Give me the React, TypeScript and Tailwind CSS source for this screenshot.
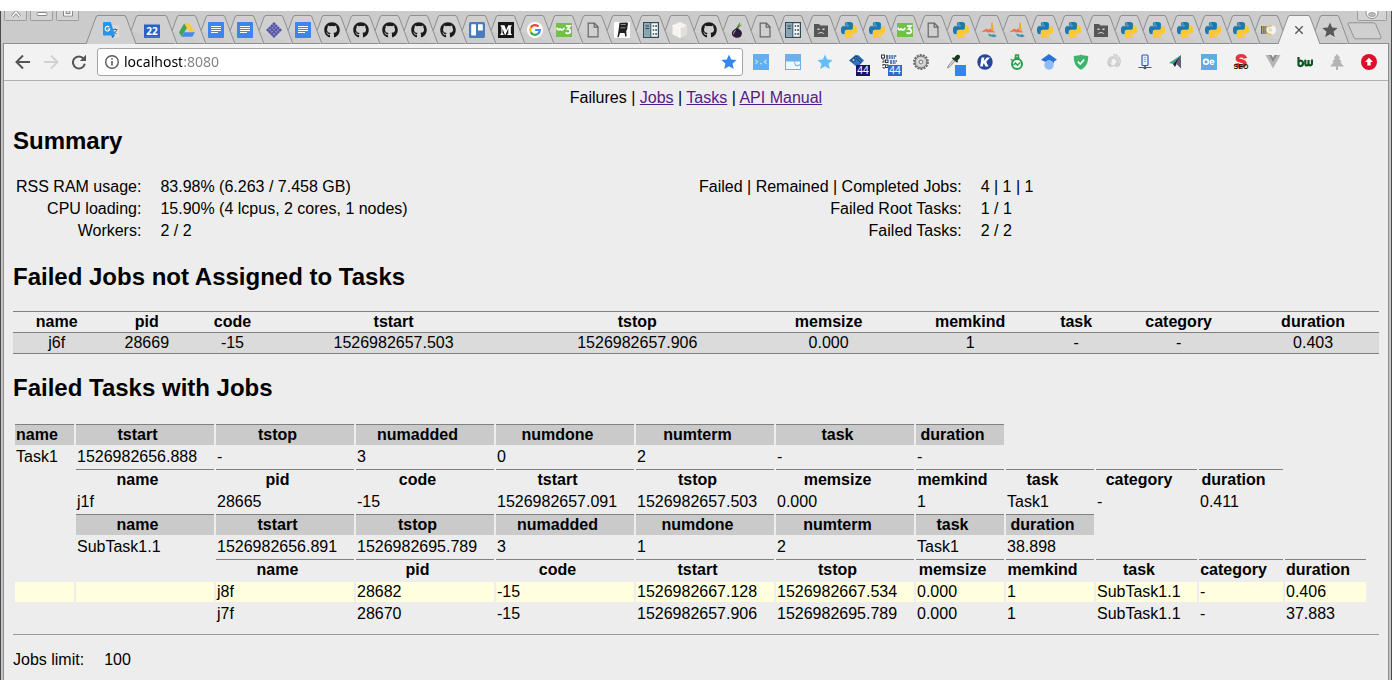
import React from "react";
import { FaGithub } from "react-icons/fa";

/* ---------- icons ---------- */

function Svg({ children, box = 16, size = "size-4" }: { children: React.ReactNode; box?: number; size?: string }) {
  return (
    <svg viewBox={`0 0 ${box} ${box}`} className={`${size} block shrink-0`} aria-hidden="true">
      {children}
    </svg>
  );
}

const pythonHalf =
  "M14.25.18l.9.2.73.26.59.3.45.32.34.34.25.34.16.33.1.3.04.26.02.2-.01.13V8.5l-.05.63-.13.55-.21.46-.26.38-.3.31-.33.25-.35.19-.35.14-.33.1-.3.07-.26.04-.21.02H8.77l-.69.05-.59.14-.5.22-.41.27-.33.32-.27.35-.2.36-.15.37-.1.35-.07.32-.04.27-.02.21v3.06H3.17l-.21-.03-.28-.07-.32-.12-.35-.18-.36-.26-.36-.36-.35-.46-.32-.59-.28-.73-.21-.88-.14-1.05-.05-1.23.06-1.22.16-1.04.24-.87.32-.71.36-.57.4-.44.42-.33.42-.24.4-.16.36-.1.32-.05.24-.01h.16l.06.01h8.16v-.83H6.18l-.01-2.75-.02-.37.05-.34.11-.31.17-.28.25-.26.31-.23.38-.2.44-.18.51-.15.58-.12.64-.1.71-.06.77-.04.84-.02 1.27.05zm-6.3 1.98l-.23.33-.08.41.08.41.23.34.33.22.41.09.41-.09.33-.22.23-.34.08-.41-.08-.41-.23-.33-.33-.22-.41-.09-.41.09z";

const Python = () => (
  <Svg box={24}>
    <path d={pythonHalf} fill="#1f78ab" stroke="#1f78ab" strokeWidth=".4" />
    <path d={pythonHalf} fill="#fdc92f" stroke="#fdc92f" strokeWidth=".4" transform="rotate(180 12 12)" />
  </Svg>
);
const Github = () => <FaGithub className="size-4 text-[#1b1b1b]" />;
const Doc = () => (
  <Svg>
    <rect width="16" height="16" rx=".8" fill="#3b85ee" />
    <path d="M3 4.5h10M3 6.5h10M3 8.5h10M3 10.5h7" stroke="#fff" strokeWidth="1" />
  </Svg>
);
const Translate = () => (
  <Svg>
    <rect x="7" y="3.5" width="9" height="12" rx="1" fill="#dcdcdc" />
    <path d="M9.5 7.5h5M12 6.3v1.2M13.8 7.5c-.5 2-2 3.5-3.6 4.3M10.5 9c.7 1.3 2 2.4 3.2 2.9" stroke="#65747a" fill="none" />
    <path d="M1 0h6.8L12 13.5H1a1 1 0 0 1-1-1V1a1 1 0 0 1 1-1z" fill="#2196f3" />
    <path d="M8 13.5h4L9.5 16z" fill="#1565c0" />
    <path d="M6.3 5.2A2.3 2.3 0 1 0 6.8 7H4.7" stroke="#fff" strokeWidth="1.1" fill="none" />
  </Svg>
);
const Calendar = () => (
  <Svg>
    <path d="M1 1h14v3H1z" fill="#c4cbd6" />
    <path d="M0 2.5h16V15H0z" fill="#2b60c8" />
    <path d="M0 14h16v2H0z" fill="#2f70dd" />
    <text x="8" y="12.6" fontSize="10" fontWeight="700" textAnchor="middle" fill="#fff" fontFamily="Noto Sans, sans-serif">22</text>
  </Svg>
);
const Drive = () => (
  <Svg>
    <path d="M5.3 1.3 0 10.3l2.7 4.5L8 5.8z" fill="#41a556" />
    <path d="M5.3 1.3h5.4L16 10.3h-5.3z" fill="#fccb3f" />
    <path d="M5.3 10.3H16l-2.7 4.5H2.7z" fill="#4688f1" />
  </Svg>
);
const Weave = () => (
  <Svg>
    <path d="M8 0l8 8-8 8-8-8z" fill="#5557a5" />
    <path d="M6 2l8 8M4 4l8 8M2 6l8 8M10 2l-8 8M12 4l-8 8M14 6l-8 8" stroke="#c7c7db" strokeWidth=".6" strokeDasharray="1.3 1" />
  </Svg>
);
const Trello = () => (
  <Svg>
    <rect width="16" height="16" rx="1.6" fill="#4a7cbd" />
    <rect x="2.2" y="2.2" width="4.8" height="11.2" rx=".6" fill="#fff" />
    <rect x="9" y="2.2" width="4.8" height="6.4" rx=".6" fill="#fff" />
  </Svg>
);
const Medium = () => (
  <Svg>
    <rect width="16" height="16" fill="#161616" />
    <path d="M2.5 3.2h3.9L8.3 8l1.9-4.8h3.6v.9l-1 .7v6.7l1 .7v.9H9.3v-.9l1-.7V6.2l-2.8 6.9h-.6L4.5 6.4v4.7l1.1 1.2v.8H2.4v-.8l1-1.2V4.9l-.9-.8z" fill="#fff" />
  </Svg>
);
const Google = () => (
  <Svg>
    <circle cx="8" cy="8" r="8" fill="#fff" />
    <g fill="none" strokeWidth="2.2">
      <path d="M3.8 5.6A4.8 4.8 0 0 1 11.5 4.6" stroke="#ea4335" />
      <path d="M3.8 5.6a4.8 4.8 0 0 0 0 4.8" stroke="#fbbc05" />
      <path d="M3.8 10.4a4.8 4.8 0 0 0 7.3 1.3" stroke="#34a853" />
      <path d="M11.1 11.7A4.8 4.8 0 0 0 12.8 8H8.2" stroke="#4285f4" />
    </g>
  </Svg>
);
const W3 = () => (
  <Svg>
    <rect y="1" width="16" height="14" rx=".6" fill="#70c04a" />
    <path d="M1 5.6c.1 2.4 2.6 3 3.3.7.4 2.3 3.2 2.2 3.8-.7M10 4h4l-2.3 2.8c3.7 0 3.3 5-.2 4.6-.9-.1-1.4-.5-1.8-1" stroke="#fff" strokeWidth="1.8" fill="none" />
  </Svg>
);
const Page = () => (
  <Svg>
    <path d="M3.2 1.2h6.2l3.6 3.6v10H3.2zM9.2 1.4v3.8h3.6" fill="none" stroke="#666" strokeWidth="1.2" />
  </Svg>
);
const Chair = () => (
  <Svg>
    <rect width="16" height="16" rx="1" fill="#fff" />
    <path d="M5.5.8l7.8-.4.7 1-.9 6.1-.9 1.5.4 5.500h-1.400L10.600 11H6l-1.300 4.200H3.400L4.600 8z" fill="#222" />
    <path d="M6.800 2.500h5M6.500 5.800h5.200" stroke="#bbb" strokeWidth=".7" />
  </Svg>
);
const Ledger = () => (
  <Svg>
    <rect x=".6" y=".6" width="14.8" height="14.8" fill="#f3f5f6" stroke="#304958" strokeWidth="1.2" />
    <rect x="1.2" y="1.2" width="6.3" height="13.6" fill="#86a5b3" />
    <path d="M7.8 1v14M2.5 4h3.5M2.5 6.5h3.5" stroke="#304958" strokeWidth="1" />
    <path d="M9.7 4h1.500M12.200 4H14M9.700 8h1.500M12.200 8H14M9.700 12h1.500M12.200 12H14" stroke="#304958" strokeWidth="1.600" />
  </Svg>
);
const Cube = () => (
  <Svg>
    <path d="M8 0l7 3.3v8.9L8 16l-7.500-3.600V3.300z" fill="#f5f4f1" />
    <path d="M8 6.800l7-3.500v8.900L8 16z" fill="#e0dfdc" />
    <path d="M.5 3.300L8 6.800V16" fill="none" stroke="#fff" />
  </Svg>
);
const Onion = () => (
  <Svg>
    <path d="M8 6.500C7.600 3.700 9.400 2.500 11.200.2c.1 2.100-.9 2.400-1.500 3.800 1.500-1.100 2.200-1 3.300-1.500-1.200 1.200-3 2.300-3.200 4z" fill="#4f8c24" />
    <path d="M7.800 5.300c.8 1.700 5.100 2.400 5.100 6 0 3-2 4.500-4.700 4.500s-5.300-1.700-5.300-4.300C2.900 8 7 7.200 7.800 5.300z" fill="#2c1b39" />
    <path d="M7.400 7.600C4.600 9.400 3.800 11 4.800 13.200c.2-2.300 1.100-3.300 2.600-5.600z" fill="#cebcda" />
  </Svg>
);
const SadFolder = () => (
  <Svg>
    <path d="M1 2h5l1.500 1.500H15V15H1z" fill="#565656" />
    <path d="M4.500 7.200h2M9.500 7.200h2" stroke="#ddd" strokeWidth="1.400" />
    <path d="M5 12.200c1-2.200 5-2.200 6 0" stroke="#ddd" fill="none" />
  </Svg>
);
const Sketch = () => (
  <Svg>
    <path d="M10 .8l1.600-.3 1 8.300-2.400-1.500z" fill="#f0a52c" />
    <path d="M.4 10.200C2 8.600 3.700 7.500 5.800 6.400l1.400 1.500L9.500 6l.8 4-3.600.6-1.400-1.200z" fill="#ee704a" />
    <path d="M9.800 7.500l4.700 2.800-4.200.2z" fill="#ee704a" />
    <path d="M7.200 12c1.500-.6 2.600 0 3.400.9 1.600-1 3.200-.8 5.200 1-2 1.400-3.900 1.700-5.200.7-1.600.3-3-.8-3.400-2.600z" fill="#3f93ae" />
  </Svg>
);
const Flower = () => (
  <Svg>
    <rect y="4" width="5.500" height="8" fill="#50628b" />
    <path d="M1.800 4v8M4 4v8" stroke="#d9bd5b" />
    <path d="M5.500 8c-1-3 1-4.500 4-4.500L13 5v7l-4 .5z" fill="#efbf45" />
    <circle cx="10.300" cy="8" r="4.800" fill="#f4f4ee" />
    <path d="M6.200 5l5-1.500M6 11l4.500 2" stroke="#efbf45" strokeWidth="1.500" />
    <circle cx="9.200" cy="7.800" r="2" fill="#dedcc7" />
  </Svg>
);
const Close = () => (
  <Svg>
    <path d="M4.300 4.300l7.400 7.400M11.700 4.300l-7.400 7.400" stroke="#555" strokeWidth="1.300" />
  </Svg>
);
const starPath = "M8 .6l2.200 5 5.400.5-4.100 3.600 1.300 5.400L8 12.200l-4.800 2.900 1.300-5.400L.4 6.100l5.400-.5z";
const Star = ({ fill }: { fill: string }) => (
  <Svg>
    <path d={starPath} fill={fill} />
  </Svg>
);

/* extension icons */
const Face = () => (
  <Svg>
    <rect width="16" height="16" fill="#65aeeb" />
    <path d="M2.500 5.800l2 2-2 2M13.500 5.800l-2 2 2 2M7 9.800h2" stroke="#c4ebfc" strokeWidth="1.100" fill="none" />
  </Svg>
);
const Wave = () => (
  <Svg>
    <rect width="16" height="16" fill="#70aeea" />
    <path d="M1 7.500h7.500c1 0 1 4.800 3 4.800S13 11.400 15 11.400V15H1z" fill="#eef8ff" />
    <path d="M9.300 7.500H15v2.700c-1.800 0-2 1-3 1-1.400 0-1.500-2.700-2.700-3.700z" fill="#eef8ff" />
  </Svg>
);
const Tag = () => (
  <Svg>
    <path d="M0 6.500L6.500 1l3 .2L15 6.500l-6.500 7z" fill="#2f72bd" />
    <path d="M1.500 6.500l5-4.200 2.300.2" stroke="#14365e" fill="none" />
    <circle cx="4.500" cy="6" r="1.700" fill="#9fc6ec" stroke="#173e6e" />
    <path d="M7 4l5 5M9 3l4 4" stroke="#173e6e" />
  </Svg>
);
const Tree = () => (
  <Svg>
    <path d="M2 4v10M2 7h3M2 10.500h3M2 14h3M5 2h2" stroke="#444" strokeDasharray="2 1" />
    <rect x=".5" y="1" width="3" height="3" fill="#fff" stroke="#333" />
    <rect x="4.500" y="6" width="2.500" height="2.500" fill="#fff" stroke="#333" />
    <rect x="4.500" y="11" width="2.500" height="2.500" fill="#fff" stroke="#333" />
    <path d="M5 2h11M5 4h9M9 7h7M9 9h6" stroke="#275f9e" strokeWidth="1.400" strokeDasharray="2 .7" />
  </Svg>
);
const Gear = () => (
  <Svg>
    <circle cx="8" cy="8" r="6.900" fill="none" stroke="#6b6b6b" strokeWidth="2" strokeDasharray="2 1.100" />
    <circle cx="8" cy="8" r="6" fill="#c9c9c9" stroke="#696969" />
    <circle cx="8" cy="8" r="3.300" fill="#a7a7a7" stroke="#efefef" />
    <circle cx="8" cy="8" r="1.600" fill="#f3f3f3" stroke="#777" strokeWidth=".7" />
  </Svg>
);
const Dropper = () => (
  <Svg>
    <path d="M9 5L3.500 11.500 2.500 14 5 12.500 10.500 6.500" fill="#ddd" stroke="#777" strokeWidth=".8" />
    <path d="M7.500 3.500l2 .3C10.500 1.500 12 0 14 1s.8 4-1.300 5l.3 2.200-1.200.3L7 4.500z" fill="#19391f" />
  </Svg>
);
const KBadge = () => (
  <Svg>
    <circle cx="8" cy="8" r="7.700" fill="#23479c" />
    <path d="M4.600 3.500h2.800l-.6 3.400 3-3.400h3.300L9.200 7.700l2.300 4.800H8.400L7 9.200l-.7.800-.4 2.500H3.100z" fill="#fff" />
  </Svg>
);
const Potion = () => (
  <Svg>
    <circle cx="8" cy="10" r="5" fill="#effaf0" stroke="#2d9e4b" strokeWidth="2" />
    <path d="M5.500 4h5M6.500 1h3v4h-3zM1.800 5.300l2 1.500" stroke="#2d9e4b" strokeWidth="1.400" fill="#a6dcb2" />
    <path d="M4.500 11l2-2 2 2.300 2.700-2.800" fill="none" stroke="#2d9e4b" strokeWidth="1.400" />
  </Svg>
);
const Scholar = () => (
  <Svg>
    <circle cx="8" cy="11" r="4.700" fill="#8dbcf8" />
    <path d="M8 0l8 5.700-3 1.800v2L11.700 8C9.500 5.800 6.500 5.800 4.300 8L0 5.700z" fill="#2b72d5" />
  </Svg>
);
const Shield = () => (
  <Svg>
    <path d="M8 .5c2 1 4.500 1.300 7.200 1.500 0 6-1.200 10.500-7.200 13.700C2 12.500.8 8 .8 2 3.500 1.800 6 1.500 8 .5z" fill="#3eb36b" />
    <path d="M4.800 7.600L7.200 10l4-4.600" stroke="#fff" strokeWidth="1.600" fill="none" />
  </Svg>
);
const Swirl = () => (
  <Svg>
    <path d="M7 13.500C1.500 13 .5 5 6.500 2c-2 2.500-2 8 .5 11.500z" fill="#c9c9c9" />
    <path d="M5.500 9.500C4 5.500 7 2.500 10 3.500s4 6 1 9.500" fill="none" stroke="#d4d4d4" strokeWidth="3" />
    <path d="M5.500 10.500c2 2.500 5.500 1.500 5.800-1.500M8 .8c6-.8 9.500 6 5.500 11.500" fill="none" stroke="#bdbdbd" />
  </Svg>
);
const Server = () => (
  <Svg>
    <rect x="5" y="1" width="6" height="10.500" rx="1" fill="#eaf2ff" stroke="#355fae" strokeWidth="1.200" />
    <path d="M6.800 3.500h2.400M6.800 5.500h2.400M6.800 7.500h2.400" stroke="#6f92cf" strokeWidth=".8" />
    <path d="M8 11.500v2M1.500 13.500h13" stroke="#555" strokeWidth="1.200" />
    <circle cx="8" cy="13.700" r="1.500" fill="#555" />
  </Svg>
);
const Arrow = () => (
  <Svg>
    <path d="M12 1L0 9l4 1z" fill="#3aad88" />
    <path d="M12 1L4 10l2 3 2-4z" fill="#1b222c" />
    <path d="M12 1L7 9.500l5 5z" fill="#8c4c9f" />
    <path d="M12 1L9 10l3 4.500z" fill="#4a6d70" />
  </Svg>
);
const Oe = () => (
  <Svg>
    <rect width="16" height="16" fill="#5faedf" />
    <circle cx="5" cy="7.800" r="2.400" fill="none" stroke="#fff" strokeWidth="1.600" />
    <path d="M9.300 8.200h3.800c0-2.800-4-2.900-4 .1 0 2.500 2.800 2.600 3.800 1.400" fill="none" stroke="#fff" strokeWidth="1.200" />
  </Svg>
);
const Seo = () => (
  <Svg>
    <path d="M12.300 4.400C11.800 2.300 10.200 1.800 8 1.800c-4.200 0-4.800 4-1.300 4.800 3 .7 5.300.8 5.300 3.100 0 3.200-7.500 3-8.200-.4" fill="none" stroke="#e6343a" strokeWidth="3.600" />
    <text x="8" y="15" fontSize="7" fontWeight="700" textAnchor="middle" fill="#111" fontFamily="Liberation Sans, sans-serif">SEO</text>
  </Svg>
);
const Vue = () => (
  <Svg>
    <path d="M.5 1h3.300L8 8.400 12.200 1h3.300L8 14.500z" fill="#b5b5b5" />
    <path d="M3.800 1h2.700L8 3.700 9.500 1h2.700L8 8.400z" fill="#8b8b8b" />
  </Svg>
);
const Bw = () => (
  <Svg>
    <path d="M1.500 3v8.800M1.500 8c1-2 4.500-1.800 4.500 1.300s-3.600 3.600-4.500 1.500M8.300 5.700v4.100c0 2.400 3.200 2.200 3.200-.2V6v3.600c0 2.500 3.500 2.500 3.500-.3V5.500" stroke="#0c5420" strokeWidth="2.200" fill="none" />
  </Svg>
);
const Fir = () => (
  <Svg>
    <path d="M8 0l3.500 4.300H9.800l3 3.700h-1.600l3.800 4.500H9V16H7v-3.500H1L4.800 8H3.200l3-3.700H4.500z" fill="#b4b4b4" />
  </Svg>
);
const RedUp = () => (
  <Svg>
    <circle cx="8" cy="8" r="8" fill="#e30b2c" />
    <path d="M8 3.800l4 4.300H9.700v3.500H6.300V8.100H4z" fill="#fff" />
  </Svg>
);

/* ---------- tab strip ---------- */

type IconType = () => React.ReactElement;
type TabInfo = { title: string; icon: IconType; width: number; cls: string };

const wide = 29;
const narrow = 28;
const t = (title: string, icon: IconType, width = wide, cls = width === wide ? "w-[29px]" : "w-[28px]"): TabInfo => ({
  title,
  icon,
  width,
  cls,
});

const tabs: TabInfo[] = [
  t("Translate", Translate, 40, "w-[40px]"),
  t("Calendar", Calendar, 41, "w-[41px]"),
  t("Drive", Drive),
  t("Document", Doc),
  t("Document", Doc),
  t("Weave", Weave),
  t("Document", Doc),
  t("GitHub", Github),
  t("GitHub", Github),
  t("GitHub", Github),
  t("GitHub", Github),
  t("GitHub", Github),
  t("Trello", Trello),
  t("Medium", Medium),
  t("Google", Google),
  t("W3Schools", W3),
  t("Page", Page),
  t("Chair", Chair),
  t("Ledger", Ledger),
  t("Cube", Cube),
  t("GitHub", Github),
  t("Tor", Onion, narrow),
  t("Page", Page, narrow),
  t("Ledger", Ledger, narrow),
  t("Crashed page", SadFolder, narrow),
  t("Python", Python, narrow),
  t("Python", Python, narrow),
  t("W3Schools", W3, narrow),
  t("Page", Page, narrow),
  t("Python", Python, narrow),
  t("Sketch", Sketch, narrow),
  t("Sketch", Sketch, narrow),
  t("Python", Python, narrow),
  t("Python", Python, narrow),
  t("Crashed page", SadFolder, narrow),
  t("Python", Python, narrow),
  t("Python", Python, narrow),
  t("Python", Python, narrow),
  t("Python", Python, narrow),
  t("Python", Python, narrow),
  t("Flower", Flower, narrow),
  t("Close localhost:8080", Close, 32, "w-[32px]"),
  t("Bookmarks", () => <Star fill="#585858" />),
];

function Tab({ tab, first, active }: { tab: TabInfo; first: boolean; active: boolean }) {
  const w = tab.width;
  const left = first || active ? "M-5 33L5 6Q5.500 4.500 7 4.500" : "M0 20L5 6Q5.500 4.500 7 4.500";
  const d = `${left}H${w - 7}Q${w - 5.5} 4.500 ${w - 5} 6L${w + 5} 33`;
  const Icon = tab.icon;
  return (
    <button
      type="button"
      aria-label={tab.title}
      className={`${tab.cls} ${active ? "z-10" : ""} relative flex h-8 shrink-0 justify-center pt-[11px]`}
    >
      <svg className="absolute inset-0 size-full overflow-visible" aria-hidden="true">
        <path d={d} fill={active ? "#f2f2f2" : "#d0d0d0"} stroke="#8f8f8f" />
      </svg>
      <span className="relative">
        <Icon />
      </span>
    </button>
  );
}

function WindowButton({ label, children }: { label: string; children: React.ReactNode }) {
  return (
    <button
      type="button"
      aria-label={label}
      className="flex h-[10px] w-[23px] justify-center overflow-hidden rounded-b-xs border border-t-0 border-[#9d9d9d] bg-[#d3d3d3]"
    >
      <svg viewBox="0 0 12 8" className="h-2 w-3" aria-hidden="true">
        {children}
      </svg>
    </button>
  );
}

function TabStrip() {
  return (
    <div className="flex h-8 items-start bg-[#cbcbcb] pl-[3px]">
      <div className="flex shrink-0 gap-[3px] pr-3">
        <WindowButton label="Close">
          <path d="M2 5.500L6 1l4 4.500" stroke="#888" strokeWidth="3" fill="none" />
          <path d="M2 5.500L6 1l4 4.500" stroke="#fff" strokeWidth="1.300" fill="none" />
        </WindowButton>
        <WindowButton label="Minimize">
          <rect x="1" y="1.500" width="10" height="3" rx="1" fill="#fff" stroke="#888" />
        </WindowButton>
        <WindowButton label="Maximize">
          <path d="M1.500-2v7h9v-7M4-2v4.500h4V-2" fill="none" stroke="#888" />
          <path d="M2.800-2v5.800h6.400V-2" fill="none" stroke="#fff" strokeWidth="1.200" />
        </WindowButton>
      </div>
      <div className="flex shrink-0">
        {tabs.map((tab, i) => (
          <Tab key={i} tab={tab} first={i === 0} active={i === tabs.length - 2} />
        ))}
      </div>
      <div className="flex flex-1 flex-col items-start pl-[3px]">
        <button
          type="button"
          aria-label="Profile"
          className="mr-1 flex h-[10px] w-[30px] justify-center self-end overflow-hidden rounded-b-xs border border-t-0 border-[#9d9d9d] bg-[#d3d3d3]"
        >
          <svg viewBox="0 0 14 9" className="h-[9px] w-[14px]" aria-hidden="true">
            <circle cx="7" cy="1.500" r="6" fill="#fff" stroke="#888" />
            <ellipse cx="7" cy="3.500" rx="3.500" ry="2" fill="#bbb" stroke="#888" strokeWidth=".7" />
          </svg>
        </button>
        <button type="button" aria-label="New tab" className="mt-px">
          <svg viewBox="0 0 35 18" className="h-[18px] w-[35px]" aria-hidden="true">
            <path d="M2 .8h24.500Q28 .8 28.600 2L34 15q.5 1.800-1 1.800H9Q7.500 16.800 7 15.500L1 2Q.6.8 2 .8z" fill="#d0d0d0" stroke="#929292" />
          </svg>
        </button>
      </div>
    </div>
  );
}

/* ---------- toolbar ---------- */

type Ext = { name: string; icon: IconType; badge?: string; badgeCls?: string };

const extensions: Ext[] = [
  { name: "Face", icon: Face },
  { name: "Wave", icon: Wave },
  { name: "Favourites", icon: () => <Star fill="#64bdf6" /> },
  { name: "Tags", icon: Tag, badge: "44", badgeCls: "bg-[#1b1367]" },
  { name: "Tree", icon: Tree, badge: "44", badgeCls: "bg-[#2f6bc9]" },
  { name: "Settings", icon: Gear },
  { name: "Colour picker", icon: Dropper, badge: "", badgeCls: "bg-[#3584ee]" },
  { name: "K", icon: KBadge },
  { name: "Potion", icon: Potion },
  { name: "Scholar", icon: Scholar },
  { name: "Shield", icon: Shield },
  { name: "Swirl", icon: Swirl },
  { name: "Server", icon: Server },
  { name: "Arrow", icon: Arrow },
  { name: "Oe", icon: Oe },
  { name: "SEO", icon: Seo },
  { name: "Vue", icon: Vue },
  { name: "bw", icon: Bw },
  { name: "Fir", icon: Fir },
  { name: "Update", icon: RedUp },
];

function Toolbar() {
  return (
    <div className="flex h-[37px] items-center border-b border-[#b0b0b0] bg-[#f2f2f2] pr-[3px] pl-[11px]">
      <div className="flex shrink-0 gap-3">
        <button type="button" aria-label="Back">
          <Svg>
            <path d="M15 8H2.500M8 1.500L1.500 8 8 14.500" fill="none" stroke="#555" strokeWidth="2" />
          </Svg>
        </button>
        <button type="button" aria-label="Forward">
          <Svg>
            <path d="M1 8h12.500M8 1.500l6.500 6.500L8 14.500" fill="none" stroke="#d2d2d2" strokeWidth="2" />
          </Svg>
        </button>
        <button type="button" aria-label="Reload">
          <Svg>
            <path d="M12.600 4.600A6 6 0 1 0 13.800 9.800" fill="none" stroke="#555" strokeWidth="2" />
            <path d="M15 .8V7H8.800z" fill="#555" />
          </Svg>
        </button>
      </div>
      <div className="ml-[10px] flex h-7 min-w-0 flex-1 items-center rounded-[3px] border border-[#a6a6a6] bg-white pr-[5px] pl-[6px]">
        <Svg>
          <circle cx="8" cy="8" r="6.300" fill="none" stroke="#5a5a5a" strokeWidth="1.400" />
          <path d="M8 7v4.500M8 4.300v1.500" stroke="#5a5a5a" strokeWidth="1.600" />
        </Svg>
        <input
          type="text"
          aria-label="Address"
          defaultValue="localhost:8080"
          className="ml-1 h-6 min-w-0 flex-1 bg-[linear-gradient(to_right,#000_58px,#808080_58px)] bg-clip-text pb-[2px] font-['Noto_Sans',sans-serif] text-sm text-transparent outline-none"
        />
        <button type="button" aria-label="Bookmark this page">
          <Star fill="#3684ee" />
        </button>
      </div>
      <div className="ml-[2px] flex shrink-0">
        {extensions.map(({ name, icon: Icon, badge, badgeCls }) => (
          <button key={name} type="button" aria-label={name} className="relative flex h-7 w-8 items-center justify-center">
            <Icon />
            {badge !== undefined && (
              <span
                className={`${badgeCls} ${badge ? "w-[14px]" : "w-[11px]"} absolute right-[3px] bottom-0 h-[11px] text-center font-['Noto_Sans',sans-serif] text-[10px] leading-[10px] text-white`}
              >
                {badge}
              </span>
            )}
          </button>
        ))}
      </div>
    </div>
  );
}

/* ---------- page ---------- */

function Heading({ children }: { children: React.ReactNode }) {
  return <h2 className="my-5 text-2xl leading-7 font-bold">{children}</h2>;
}

function StatTable({ rows }: { rows: [string, string][] }) {
  return (
    <table className="border-separate border-spacing-[2px]">
      <tbody>
        {rows.map(([label, value]) => (
          <tr key={label}>
            <th scope="row" className="py-px pr-4 pl-px text-right font-normal">
              {label}
            </th>
            <td className="p-px">{value}</td>
          </tr>
        ))}
      </tbody>
    </table>
  );
}

const jobFields = ["name", "pid", "code", "tstart", "tstop", "memsize", "memkind", "task", "category", "duration"];
const taskFields = ["name", "tstart", "tstop", "numadded", "numdone", "numterm", "task", "duration"];

type Row = { kind: "taskHead" | "jobHead" | "data" | "marked"; indent: number; cells: string[] };

const taskRows: Row[] = [
  { kind: "taskHead", indent: 0, cells: taskFields },
  { kind: "data", indent: 0, cells: ["Task1", "1526982656.888", "-", "3", "0", "2", "-", "-"] },
  { kind: "jobHead", indent: 1, cells: jobFields },
  { kind: "data", indent: 1, cells: ["j1f", "28665", "-15", "1526982657.091", "1526982657.503", "0.000", "1", "Task1", "-", "0.411"] },
  { kind: "taskHead", indent: 1, cells: taskFields },
  { kind: "data", indent: 1, cells: ["SubTask1.1", "1526982656.891", "1526982695.789", "3", "1", "2", "Task1", "38.898"] },
  { kind: "jobHead", indent: 2, cells: jobFields },
  { kind: "marked", indent: 2, cells: ["j8f", "28682", "-15", "1526982667.128", "1526982667.534", "0.000", "1", "SubTask1.1", "-", "0.406"] },
  { kind: "data", indent: 2, cells: ["j7f", "28670", "-15", "1526982657.906", "1526982695.789", "0.000", "1", "SubTask1.1", "-", "37.883"] },
];

const taskCols = [
  "w-[59px]", "w-[138px]", "w-[138px]", "w-[138px]", "w-[138px]", "w-[138px]",
  "w-[138px]", "w-[88px]", "w-[88px]", "w-[101px]", "w-[84px]", "w-[81px]",
];

function TaskTable() {
  return (
    <table className="border-separate border-spacing-[2px]">
      <colgroup>
        {taskCols.map((c, i) => (
          <col key={i} className={c} />
        ))}
      </colgroup>
      <tbody>
        {taskRows.map((row, r) => {
          const fill = row.kind === "marked" ? "bg-[#ffffe0]" : "";
          return (
            <tr key={r}>
              {Array.from({ length: row.indent }, (_, i) => (
                <td key={`indent${i}`} className={fill} />
              ))}
              {row.cells.map((cell, i) =>
                row.kind === "taskHead" || row.kind === "jobHead" ? (
                  <th
                    key={i}
                    className={`${row.kind === "taskHead" ? "bg-[#cacaca]" : ""} border-t border-[#808080] py-px pr-4 pl-px text-center font-bold`}
                  >
                    {cell}
                  </th>
                ) : (
                  <td key={i} className={`${fill} py-px pr-4 pl-px`}>
                    {cell}
                  </td>
                ),
              )}
            </tr>
          );
        })}
      </tbody>
    </table>
  );
}

export default function App() {
  const link = "text-[#551a8b] underline";
  return (
    <div className="flex min-h-screen flex-col bg-white py-[11px]">
      <div className="flex flex-1 flex-col border-x border-[#4a4a4a] bg-[#c4c4c4]">
        <TabStrip />
        <div className="mr-[2px] ml-[2px] flex flex-1 flex-col border-x border-t border-[#8f8f8f] bg-[#ededed]">
          <Toolbar />
          <main className="flex-1 px-[9px] pt-2 font-['Liberation_Sans',Arial,sans-serif] text-base leading-[18px] text-black">
            <nav className="text-center">
              Failures |{" "}
              <a href="#jobs" className={link}>Jobs</a> |{" "}
              <a href="#tasks" className={link}>Tasks</a> |{" "}
              <a href="#api" className={link}>API Manual</a>
            </nav>

            <Heading>Summary</Heading>
            <div className="grid grid-cols-2 items-start justify-items-start">
              <StatTable
                rows={[
                  ["RSS RAM usage:", "83.98% (6.263 / 7.458 GB)"],
                  ["CPU loading:", "15.90% (4 lcpus, 2 cores, 1 nodes)"],
                  ["Workers:", "2 / 2"],
                ]}
              />
              <StatTable
                rows={[
                  ["Failed | Remained | Completed Jobs:", "4 | 1 | 1"],
                  ["Failed Root Tasks:", "1 / 1"],
                  ["Failed Tasks:", "2 / 2"],
                ]}
              />
            </div>

            <Heading>Failed Jobs not Assigned to Tasks</Heading>
            <table className="w-full border-collapse text-center">
              <thead>
                <tr className="border-y border-[#808080]">
                  {jobFields.map((f) => (
                    <th key={f} scope="col" className="p-px font-bold">{f}</th>
                  ))}
                </tr>
              </thead>
              <tbody>
                <tr className="border-y border-[#808080] bg-[#dbdbdb]">
                  {["j6f", "28669", "-15", "1526982657.503", "1526982657.906", "0.000", "1", "-", "-", "0.403"].map((v, i) => (
                    <td key={i} className="p-px">{v}</td>
                  ))}
                </tr>
              </tbody>
            </table>

            <Heading>Failed Tasks with Jobs</Heading>
            <TaskTable />

            <hr className="my-2 border-t border-[#9a9a9a]" />
            <p className="flex gap-5 pt-2">
              <span>Jobs limit:</span>
              <span>100</span>
            </p>
          </main>
        </div>
      </div>
    </div>
  );
}
